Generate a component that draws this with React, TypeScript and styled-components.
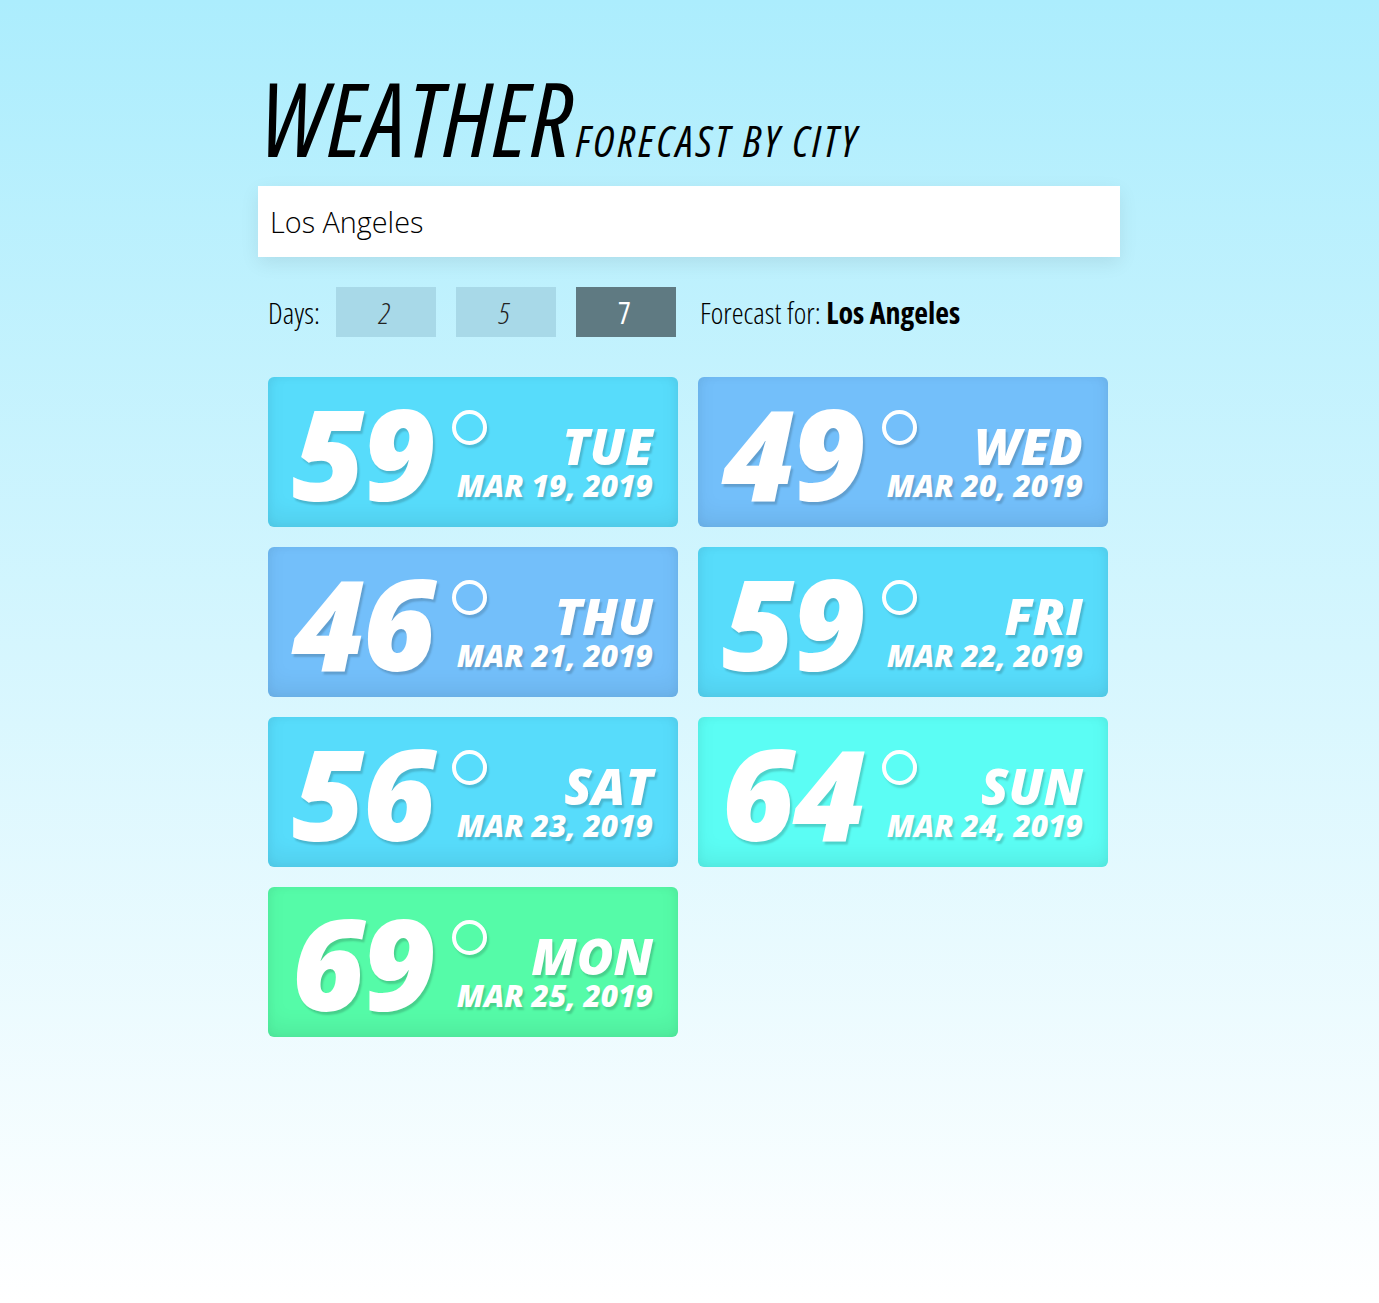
import styled, { createGlobalStyle } from "styled-components";

const GlobalStyle = createGlobalStyle`
  html, body {
    margin: 0;
    padding: 0;
  }
  body {
    min-height: 1303px;
    background: linear-gradient(#acedfd, #ffffff);
    font-family: "Open Sans", "Liberation Sans", sans-serif;
    color: #000;
  }
`;

const Wrapper = styled.div`
  width: 863px;
  margin: 0 auto;
  padding-top: 67px;
`;

const Title = styled.h1`
  margin: 0 0 17px 3px;
  font-size: 102px;
  line-height: 1;
  font-weight: 400;
  font-style: italic;
  font-stretch: 75%;
  letter-spacing: 1px;
  white-space: nowrap;
`;

const SubTitle = styled.span`
  font-size: 43px;
  letter-spacing: 3px;
  margin-left: 2px;
`;

const SearchInput = styled.input`
  display: block;
  box-sizing: border-box;
  width: 862px;
  height: 71px;
  padding: 0 12px;
  border: none;
  outline: none;
  background: #fff;
  box-shadow: 0 6px 18px rgba(0, 0, 0, 0.08);
  font-family: "Open Sans", sans-serif;
  font-weight: 300;
  font-size: 28.8px;
  color: #000;
`;

const Controls = styled.div`
  display: flex;
  align-items: center;
  margin-top: 30px;
  padding: 0 10px;
  height: 50px;
  font-stretch: 75%;
  font-weight: 300;
  font-size: 30px;
`;

const Label = styled.span`
  margin-right: 16px;
`;

const DayButton = styled.button<{ $active?: boolean }>`
  width: 100px;
  height: 50px;
  margin-right: 20px;
  border: none;
  padding: 0 3px 0 0;
  background: ${(p) => (p.$active ? "#5f7a82" : "#a8d9e8")};
  color: ${(p) => (p.$active ? "#fff" : "#222")};
  font-family: "Open Sans", sans-serif;
  font-stretch: 75%;
  font-style: ${(p) => (p.$active ? "normal" : "italic")};
  font-weight: ${(p) => (p.$active ? 400 : 300)};
  font-size: 30px;
  cursor: pointer;
`;

const ForecastFor = styled.span`
  margin-left: 4px;
  b {
    font-weight: 700;
  }
`;

const Grid = styled.div`
  display: grid;
  grid-template-columns: repeat(2, 410px);
  gap: 20px;
  margin-top: 40px;
  padding: 0 10px;
`;

const Card = styled.div<{ $bg: string }>`
  display: flex;
  align-items: center;
  height: 150px;
  padding: 0 25px 0 24px;
  box-sizing: border-box;
  border-radius: 6px;
  background: ${(p) => p.$bg};
  box-shadow: inset 0 -12px 20px rgba(0, 0, 0, 0.06),
    inset 0 0 10px rgba(0, 0, 0, 0.06);
  color: #fff;
  font-style: italic;
  font-weight: 800;
  white-space: nowrap;
  text-shadow: 2px 3px 2px rgba(0, 0, 0, 0.17);
`;

const Temp = styled.span`
  font-size: 126px;
  line-height: 1;
  letter-spacing: -2px;
`;

const Degree = styled.span`
  flex-shrink: 0;
  align-self: flex-start;
  width: 27px;
  height: 27px;
  margin: 33px -35px 0 18px;
  border: 4px solid #fff;
  border-radius: 50%;
  box-shadow: 2px 3px 2px rgba(0, 0, 0, 0.14);
`;

const Info = styled.div`
  margin-left: auto;
  align-self: flex-end;
  margin-bottom: 26px;
  text-align: right;
  line-height: 1;
`;

const Day = styled.div`
  font-size: 50px;
`;

const DateText = styled.div`
  font-size: 30px;
`;

const forecast = [
  { temp: 59, day: "TUE", date: "MAR 19, 2019" },
  { temp: 49, day: "WED", date: "MAR 20, 2019" },
  { temp: 46, day: "THU", date: "MAR 21, 2019" },
  { temp: 59, day: "FRI", date: "MAR 22, 2019" },
  { temp: 56, day: "SAT", date: "MAR 23, 2019" },
  { temp: 64, day: "SUN", date: "MAR 24, 2019" },
  { temp: 69, day: "MON", date: "MAR 25, 2019" },
];

function colorFor(temp: number) {
  if (temp < 50) return "#73bffa";
  if (temp < 60) return "#57dcfb";
  if (temp < 65) return "#5bfdf4";
  return "#55fba8";
}

export default function App() {
  return (
    <>
      <GlobalStyle />
      <Wrapper>
        <Title>
          WEATHER<SubTitle>FORECAST BY CITY</SubTitle>
        </Title>
        <SearchInput defaultValue="Los Angeles" />
        <Controls>
          <Label>Days:</Label>
          <DayButton>2</DayButton>
          <DayButton>5</DayButton>
          <DayButton $active>7</DayButton>
          <ForecastFor>
            Forecast for: <b>Los Angeles</b>
          </ForecastFor>
        </Controls>
        <Grid>
          {forecast.map((f) => (
            <Card key={f.date} $bg={colorFor(f.temp)}>
              <Temp>{f.temp}</Temp>
              <Degree />
              <Info>
                <Day>{f.day}</Day>
                <DateText>{f.date}</DateText>
              </Info>
            </Card>
          ))}
        </Grid>
      </Wrapper>
    </>
  );
}
